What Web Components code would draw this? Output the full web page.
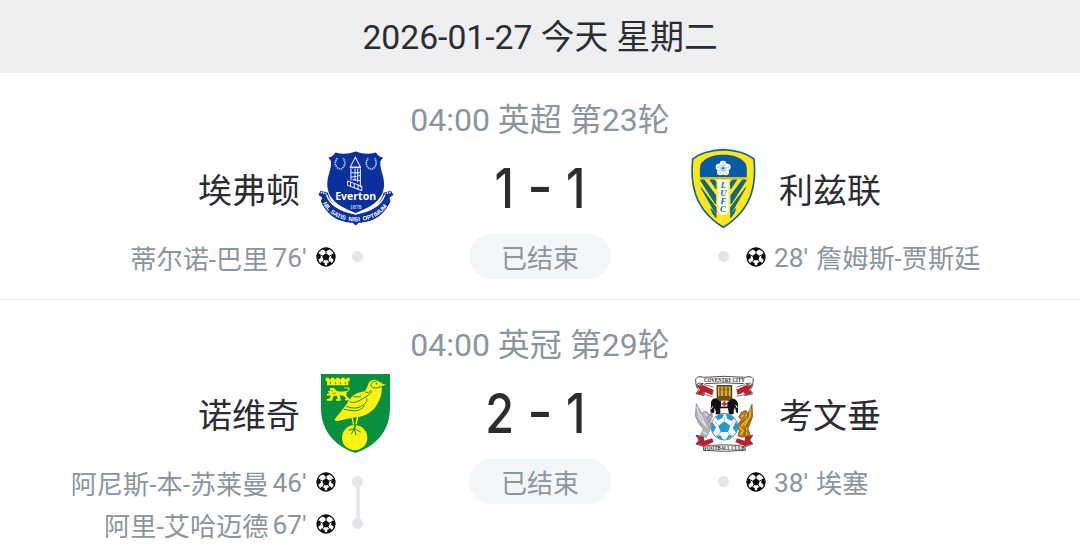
<!DOCTYPE html>
<html lang="zh-CN">
<head>
<meta charset="utf-8">
<title>赛程</title>
<style>
html,body{margin:0;background:#fff}
body{width:1080px;height:560px;overflow:hidden;font-family:Roboto,"Noto Sans CJK SC",sans-serif;color:#2b2d31}
</style>
</head>
<body>
<match-day>
  <day-header>2026-01-27 今天 星期二</day-header>
  <match-card score-home="1" score-away="1" status="已结束">
    <span slot="league">04:00 英超 第23轮</span>
    <team-label slot="home" side="home" crest="everton">埃弗顿</team-label>
    <team-label slot="away" side="away" crest="leeds">利兹联</team-label>
    <goal-list slot="home-goals" side="home"><goal-item side="home" minute="76'">蒂尔诺-巴里</goal-item></goal-list>
    <goal-list slot="away-goals" side="away"><goal-item side="away" minute="28'">詹姆斯-贾斯廷</goal-item></goal-list>
  </match-card>
  <match-card score-home="2" score-away="1" status="已结束">
    <span slot="league">04:00 英冠 第29轮</span>
    <team-label slot="home" side="home" crest="norwich">诺维奇</team-label>
    <team-label slot="away" side="away" crest="coventry">考文垂</team-label>
    <goal-list slot="home-goals" side="home"><goal-item side="home" minute="46'" linked>阿尼斯-本-苏莱曼</goal-item><goal-item side="home" minute="67'">阿里-艾哈迈德</goal-item></goal-list>
    <goal-list slot="away-goals" side="away"><goal-item side="away" minute="38'">埃塞</goal-item></goal-list>
  </match-card>
</match-day>

<script>
const CRESTS = {
everton: `<svg viewBox="2 2 266 266">
  <path d="M27 150L33 137L55 143C64 185 100 199 137 207C174 199 210 185 219 143L241 137L249 150L237 157L240 168C218 216 184 229 146 232L137 240L128 232C90 229 56 216 34 168L38 157Z" fill="#0b2f9b"/>
  <path d="M34 142L50 146M240 142L224 146" stroke="#fff" stroke-width="5" stroke-dasharray="4 3"/>
  <path d="M77 24Q106 33 137 21Q168 33 197 24Q203 36 218 39L210 50C208 76 221 90 221 119C220 168 177 187 137 203C97 187 54 168 53 119C53 90 66 76 64 50L56 39Q71 36 77 24Z" fill="#0b2f9b"/>
  <path d="M51 149C61 181 96 198 137 206C178 198 213 181 223 149" fill="none" stroke="#fff" stroke-width="4"/>
  <g fill="none" stroke="#b9d6ff" stroke-width="5" stroke-dasharray="4 2"><path d="M83 41Q70 57 84 70Q91 76 98 70Q111 57 100 41"/><path d="M174 41Q162 57 175 70Q183 76 191 70Q203 57 193 41"/></g>
  <g fill="none" stroke="#e5efff" stroke-width="3"><path d="M136 38L121 67H151ZM120 69H153M123 72V107M151 72V127M123 84H151M123 97L151 92M127 105L152 108M135 73V108M143 73V112M113 108V121L155 137M113 108L155 124V137M122 112V124M133 116V130M144 120V134"/></g>
  <text x="137" y="165" text-anchor="middle" textLength="121" lengthAdjust="spacingAndGlyphs" font-family="Open Sans" font-weight="700" font-size="33" fill="#fff">Everton</text>
  <text x="137" y="191" text-anchor="middle" font-family="Liberation Serif" font-size="18" textLength="34" lengthAdjust="spacingAndGlyphs" fill="#fff">1878</text>
  <path id="m" d="M39 172C60 214 98 226 137 228C177 226 215 214 238 169" fill="none"/>
  <g font-family="Liberation Sans" font-weight="700" font-size="18" fill="#fff"><text><textPath href="#m" startOffset="2">NIL</textPath></text><text><textPath href="#m" startOffset="37">SATIS</textPath></text><text><textPath href="#m" startOffset="97">NISI</textPath></text><text><textPath href="#m" startOffset="141">OPTIMUM</textPath></text></g></svg>`,
leeds: `<svg viewBox="0 0 270 270">
  <path d="M130 14C170 16 201 25 222 42C229 109 222 190 130 247C38 190 31 109 38 42C59 25 90 16 130 14Z" fill="#ffe51b" stroke="#176782" stroke-width="5"/>
  <path d="M60 97C59 74 59 61 65 53C80 36 100 29 130 29C160 29 180 36 195 53C201 61 201 74 200 97Z" fill="#075ba4"/>
  <path id="leeds-bars" d="M61 105L73 105L107 151V177ZM90 105H103L108 111V131ZM63 128L108 187V207ZM93 191L108 210V218L98 205Z" fill="#11697e" stroke="#11697e" stroke-width="3"/>
  <use href="#leeds-bars" transform="translate(260 0) scale(-1 1)"/>
  <path d="M63 101H198" stroke="#cfaf23" stroke-width="3"/>
  <path d="M113 104H146V197Q144 207 130 211Q116 207 113 197Z" fill="#fff"/>
  <g fill="#fff"><circle cx="129" cy="57" r="10"/><circle cx="117" cy="66" r="10"/><circle cx="121" cy="81" r="10"/><circle cx="137" cy="81" r="10"/><circle cx="142" cy="66" r="10"/></g>
  <g fill="none" stroke="#5b93c2" stroke-width="1.600"><circle cx="129.500" cy="71" r="6"/><path d="M129 51V65M111 66L124 70M118 87L126 76M141 87L133 76M148 66L135 70M122 57L126 63M137 57L133 63M117 76L124 73M142 76L135 73M130 85V77"/></g>
  <g font-family="Liberation Serif" font-style="italic" font-weight="700" font-size="26" fill="#11697e" text-anchor="middle"><text x="130" y="129">L</text><text x="130" y="153">U</text><text x="130" y="177">F</text><text x="129" y="201">C</text></g></svg>`,
norwich: `<svg viewBox="0 6 270 270">
  <path d="M33 18H240V119C240 195 190 237 136 255C82 237 33 195 33 119Z" fill="#08903f"/>
  <circle cx="134" cy="209" r="38" fill="#fff20e"/>
  <path d="M73 155L111 107C119 88 137 74 163 70C174 61 171 46 183 38C195 31 213 38 216 47L228 50L215 55C217 75 211 93 202 108C190 130 165 148 126 149L79 160Z" fill="#fff20e"/>
  <g fill="none" stroke="#15933b" stroke-width="3"><path d="M214 43Q204 34 190 41Q177 49 188 59Q202 64 215 54M165 71Q176 78 183 66M119 101Q133 109 158 92Q179 82 186 70M130 87L154 86M109 115Q139 128 163 109Q174 99 170 92M101 124L134 129Q155 126 163 113"/></g>
  <circle cx="200" cy="47" r="2.500" fill="#08903f"/>
  <path d="M126 149L131 170M143 147L138 169" stroke="#fff20e" stroke-width="4"/>
  <path d="M133 172V182L116 187M133 180L124 199M133 182L138 202M138 170L134 182L152 192" fill="none" stroke="#16863b" stroke-width="3"/>
  <path d="M47 29H57V34H63V29H73V34H79V29H88V34H94V29H104V34H110V29H119V39H115V52H51V39H47Z" fill="#fff20e"/>
  <path d="M61 42V49M77 42V49M91 42V49M106 42V49" stroke="#21983b" stroke-width="3"/>
  <path d="M60 60H72L79 68Q94 73 106 69L111 75L108 81L118 92V97H105V93L110 91L101 84L89 81L92 94V98H78V94L84 92L80 83L71 83L66 98H50V94L60 91L62 82L50 83V79L60 76L54 73V69L60 69Z" fill="#fff20e"/>
  <path d="M108 71Q118 71 118 60H103" fill="none" stroke="#fff20e" stroke-width="3"/>
  <path d="M63 68H69M66 76H78" stroke="#21983b" stroke-width="2"/></svg>`,
coventry: `<svg viewBox="0 6 270 270">
  <g fill="#fff" stroke="#30282c" stroke-width="2.500">
  <path d="M48 54L73 47V83L48 77L56 65ZM218 54L193 47V83L218 77L210 65Z"/>
  <path d="M48 202L70 206V235L48 228L57 216ZM218 202L197 206V235L218 228L209 216Z"/>
  <path d="M47 33Q54 22 70 28Q132 22 196 28Q212 22 220 33L218 51Q209 41 197 47Q133 42 69 47Q57 41 48 51Z"/>
  <path d="M72 229Q83 234 94 232Q134 229 174 232L194 229L196 247Q133 253 70 247Z"/></g>
  <g fill="#b8202d"><path d="M50 54L69 51L101 66L97 82L72 71L70 82L50 76L60 65ZM216 54L197 51L169 64L173 81L194 71L197 82L217 76L207 65Z"/><path d="M49 203L70 207L72 218L96 211L101 222L74 234L49 227L58 217ZM217 203L196 207L194 218L171 211L166 222L193 234L217 227L209 217Z"/></g>
  <path d="M70 48L101 61M197 48L169 61M73 83L99 85M193 83L169 84" stroke="#fff" stroke-width="7"/>
  <path d="M72 50L100 57M195 50L170 57M74 80L98 86M192 80L170 85" stroke="#373338" stroke-width="2"/>
  <path d="M111 53H155V89H112Z" fill="#b68a22" stroke="#292319" stroke-width="3"/>
  <path d="M120 56V87M132 55V88M144 56V87M111 64H155M109 91L120 86H149L158 92V98H109Z" fill="#715417" stroke="#4e3b14" stroke-width="2"/>
  <path d="M116 57V84M126 57V84M138 57V84M149 57V84" stroke="#e2b63a" stroke-width="4"/>
  <path d="M108 91C98 90 91 99 93 112L91 132Q96 139 103 133V119L108 132L106 139H121V121H144L147 139H161V129L165 117L168 133L174 136V108Q172 94 159 92Q148 94 144 103L119 99Z" fill="#101116"/>
  <path d="M98 115L94 123M167 111L172 120" stroke="#fff" stroke-width="3"/>
  <path d="M123 98H142V116H123Z" fill="#f0e2d5"/><path d="M130 100H136V114H130ZM125 105H141V110H125Z" fill="#cc2a31"/>
  <path d="M49 107L65 137Q70 129 79 131L91 142L84 147L84 158L96 168L88 190L79 208L61 203L70 183L57 168L46 144Z" fill="#aeb1b7" stroke="#7c8087" stroke-width="2"/>
  <path d="M51 116L59 151L75 172M60 137L70 158L79 177M74 137L84 145M68 191L81 199" fill="none" stroke="#e2e3e8" stroke-width="4"/>
  <path d="M82 150L94 137L97 145L86 155M84 165L94 153" fill="none" stroke="#8f929b" stroke-width="5"/>
  <path d="M216 109L218 145L209 170L204 181L211 204L187 208L174 204L178 188L170 174L184 155L176 146L185 132L198 127L204 136Z" fill="#b57a20" stroke="#6b4519" stroke-width="2"/>
  <path d="M211 121L208 151L194 172M199 138L198 157L184 175M190 141L184 148M178 178L190 188L181 201M199 175L200 201" fill="none" stroke="#efbd36" stroke-width="4"/>
  <path d="M205 137L194 158L181 166M211 151L197 182L195 202M188 181L205 194" fill="none" stroke="#6b4d20" stroke-width="2"/>
  <circle cx="133" cy="176" r="40" fill="#fff" stroke="#284c61" stroke-width="2"/>
  <g fill="#239bd0"><path d="M133 160L151 173L144 192H122L115 173ZM107 147Q119 136 131 137L128 150L113 157ZM138 137Q154 139 163 151L154 159L141 152ZM97 163L108 178L99 195Q89 177 97 163ZM168 160Q177 177 169 194L158 180ZM108 203L121 202L130 215Q115 214 108 203ZM145 202H158Q149 214 138 215Z"/></g>
  <path d="M133 160V149M115 173L104 160M151 173L163 160M122 192L115 202M144 192L150 202" stroke="#8096a4" stroke-width="2"/>
  <text x="133" y="42" text-anchor="middle" font-family="Liberation Serif" font-weight="700" font-size="20" textLength="122" lengthAdjust="spacingAndGlyphs" fill="#242126">COVENTRY CITY</text>
  <text x="133" y="247" text-anchor="middle" font-family="Liberation Serif" font-weight="700" font-size="19" textLength="121" lengthAdjust="spacingAndGlyphs" fill="#242126">FOOTBALL CLUB</text></svg>`
};

const BALL = `<svg viewBox="0 0 20 20"><circle cx="10" cy="10" r="9" fill="#fff" stroke="#0c0c0c" stroke-width="1.300"/><path d="M10 6.200L13.700 9L12.300 13.200H7.700L6.300 9ZM5.800 1.800Q10 -.1 14.200 1.800L10 4.500ZM1 6.800L4.100 6.700L5 10.500L1.800 13.300Q.3 10 1 6.800ZM19 6.800L15.900 6.700L15 10.500L18.200 13.300Q19.700 10 19 6.800ZM4 16.800L5.200 14.400L8.700 16.100L8.900 19.200Q6 18.700 4 16.800ZM16 16.800L14.800 14.400L11.300 16.100L11.100 19.200Q14 18.700 16 16.800Z" fill="#0c0c0c"/><path d="M10 6.500V4M6.500 9L4.500 8M13.500 9L15.500 8M7.800 13L6.500 15M12.200 13L13.500 15" stroke="#0c0c0c" stroke-width=".9"/></svg>`;

function define(name, render) {
  customElements.define(name, class extends HTMLElement {
    connectedCallback() {
      if (!this.shadowRoot) this.attachShadow({mode:'open'}).innerHTML = render(this);
    }
  });
}

define('match-day', () => `<style>:host{display:block;width:1080px;background:#fff}</style><slot></slot>`);

define('day-header', () => `<style>:host{display:flex;justify-content:center;align-items:center;box-sizing:border-box;height:73px;padding-top:2px;background:#eeeff1;font-size:33.700px;line-height:48px;white-space:pre}</style><slot></slot>`);

define('match-card', el => `<style>
  :host{display:block;box-sizing:border-box;height:227px;border-bottom:1px solid #eceef0}
  :host(:last-of-type){height:260px;border:0}
  .league{height:72px;box-sizing:border-box;padding-top:24px;text-align:center;font-size:32px;line-height:46px;color:#8b959e}
  :host(:last-of-type) .league{height:70px;padding-top:22px}
  .row{display:grid;grid-template-columns:400px 280px 400px}
  .score{display:grid;grid-template-columns:40px 52px 40px;justify-content:center;align-items:center;height:90px;box-sizing:border-box;padding-bottom:5px;font:500 55px/60px Inter,sans-serif}
  .home{text-align:right;transform:scaleX(.85);transform-origin:right}
  .away{text-align:left;transform:scaleX(.85);transform-origin:left}
  .dash{text-align:center;padding-bottom:3px;font-weight:450}
  .status{width:142px;height:45px;margin-top:-1px;border-radius:23px;background:#f3f6f8;color:#8b959e;font-size:26px;line-height:50px;text-align:center;justify-self:center}
  </style>
  <div class="league"><slot name="league"></slot></div>
  <div class="row"><slot name="home"></slot><div class="score"><span class="home">${el.getAttribute('score-home')}</span><span class="dash">-</span><span class="away">${el.getAttribute('score-away')}</span></div><slot name="away"></slot></div>
  <div class="row"><slot name="home-goals"></slot><div class="status">${el.getAttribute('status')}</div><slot name="away-goals"></slot></div>`);

define('team-label', el => `<style>
  :host{display:flex;align-items:center;justify-content:flex-end;gap:10px;height:90px;font-size:34px;line-height:50px}
  :host([side=away]){flex-direction:row-reverse;gap:9px}
  svg{display:block;width:90px;height:90px;flex:none}
  .name{padding-top:2px}
  </style><span class="name"><slot></slot></span>${CRESTS[el.getAttribute('crest')]}`);

define('goal-list', () => `<style>:host{display:flex;flex-direction:column}</style><slot></slot>`);

define('goal-item', el => `<style>
  :host{display:flex;justify-content:flex-end;align-items:center;height:42px;padding-right:37px;color:#8b959e;font-size:26.200px;line-height:38px;white-space:pre}
  :host([side=away]){flex-direction:row-reverse;padding:0 0 0 38px}
  .name{padding-top:8px}
  .minute{margin:3px 9px 0 4px}
  :host([side=away]) .minute{margin:3px 8px 0 8px}
  :host([side=away]) .name{padding-top:6px}
  svg{display:block;width:20px;height:20px;flex:none;margin-top:2px}
  .dot{position:relative;width:11px;height:11px;border-radius:50%;background:#e1e6ea;margin:1px 0 0 16.500px}
  :host([side=away]) .dot{margin:1px 17px 0 0}
  :host([linked]) .dot::after{content:"";position:absolute;left:3.500px;top:9px;width:4px;height:35px;background:#e5e9ec}
  </style><span class="name"><slot></slot></span><span class="minute">${el.getAttribute('minute')}</span>${BALL}<i class="dot"></i>`);
</script>
</body>
</html>
